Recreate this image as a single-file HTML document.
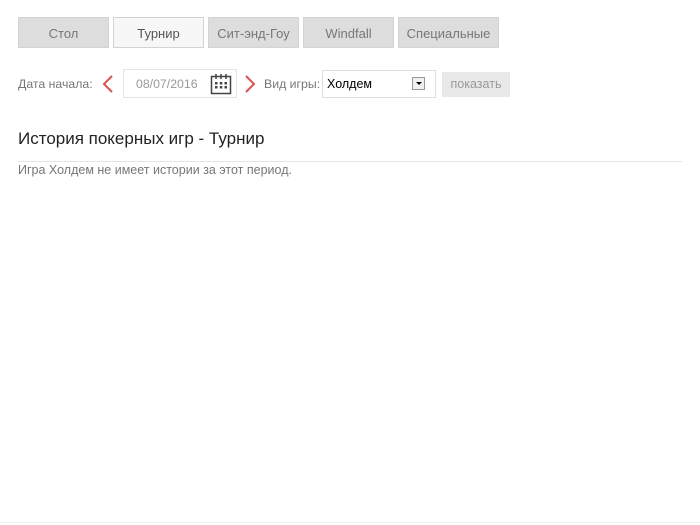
<!DOCTYPE html>
<html><head><meta charset="utf-8"><style>
body{margin:0;width:700px;height:525px;background:#fff;font-family:"Liberation Sans",Arial,sans-serif;position:relative;overflow:hidden}
.t{position:absolute;top:17px;height:31px;line-height:31px;text-align:center;font-size:13px;color:#777;background:#ddd;border:1px solid #d3d3d3;box-sizing:border-box}
.t.a{background:#f7f7f7;color:#555}
.a2{position:absolute;font-size:12.3px;color:#777}
</style></head><body>
<div class="t" style="left:18px;width:91px">Стол</div>
<div class="t a" style="left:113px;width:91px">Турнир</div>
<div class="t" style="left:208px;width:91px">Сит-энд-Гоу</div>
<div class="t" style="left:303px;width:91px">Windfall</div>
<div class="t" style="left:398px;width:101px">Специальные</div>

<div class="a2" style="left:18px;top:77px">Дата начала:</div>
<svg style="position:absolute;left:101px;top:74px" width="14" height="20"><path d="M11 2 L3 10 L11 18" stroke="#d9534f" stroke-width="2" fill="none"/></svg>
<div style="position:absolute;left:123px;top:69px;width:114px;height:29px;border:1px solid #e3e3e3;box-sizing:border-box"></div>
<div class="a2" style="left:136px;top:77px;color:#999">08/07/2016</div>
<svg style="position:absolute;left:210px;top:73px" width="22" height="22"><rect x="1.5" y="3.5" width="19" height="17" fill="none" stroke="#444" stroke-width="1.5"/><path d="M6 1v5M11 1v5M16 1v5" stroke="#444" stroke-width="1.5"/><g fill="#444"><rect x="5" y="9" width="2.5" height="2.5"/><rect x="9.8" y="9" width="2.5" height="2.5"/><rect x="14.5" y="9" width="2.5" height="2.5"/><rect x="5" y="13" width="2.5" height="2.5"/><rect x="9.8" y="13" width="2.5" height="2.5"/><rect x="14.5" y="13" width="2.5" height="2.5"/></g></svg>
<svg style="position:absolute;left:243px;top:74px" width="14" height="20"><path d="M3 2 L11 10 L3 18" stroke="#d9534f" stroke-width="2" fill="none"/></svg>
<div class="a2" style="left:264px;top:77px">Вид игры:</div>
<div style="position:absolute;left:322px;top:70px;width:114px;height:28px;border:1px solid #ddd;box-sizing:border-box"></div>
<div class="a2" style="left:327px;top:77px;color:#000;font-size:12.5px">Холдем</div>
<div style="position:absolute;left:412px;top:77px;width:13px;height:13px;border:1px solid #999;box-sizing:border-box;background:#f0f0f0"><div style="position:absolute;left:3px;top:4px;border:3px solid transparent;border-top:3px solid #000"></div></div>
<div style="position:absolute;left:442px;top:72px;width:68px;height:25px;background:#e8e8e8;color:#999;font-size:12.5px;line-height:25px;text-align:center">показать</div>

<div style="position:absolute;left:18px;top:129px;font-size:17px;color:#222">История покерных игр - Турнир</div>
<div style="position:absolute;left:18px;top:161px;width:664px;height:1px;background:#e5e5e5"></div>
<div style="position:absolute;left:18px;top:163px;font-size:12.5px;color:#777">Игра Холдем не имеет истории за этот период.</div>
<div style="position:absolute;left:0;top:522px;width:700px;height:1px;background:#eee"></div>
</body></html>
